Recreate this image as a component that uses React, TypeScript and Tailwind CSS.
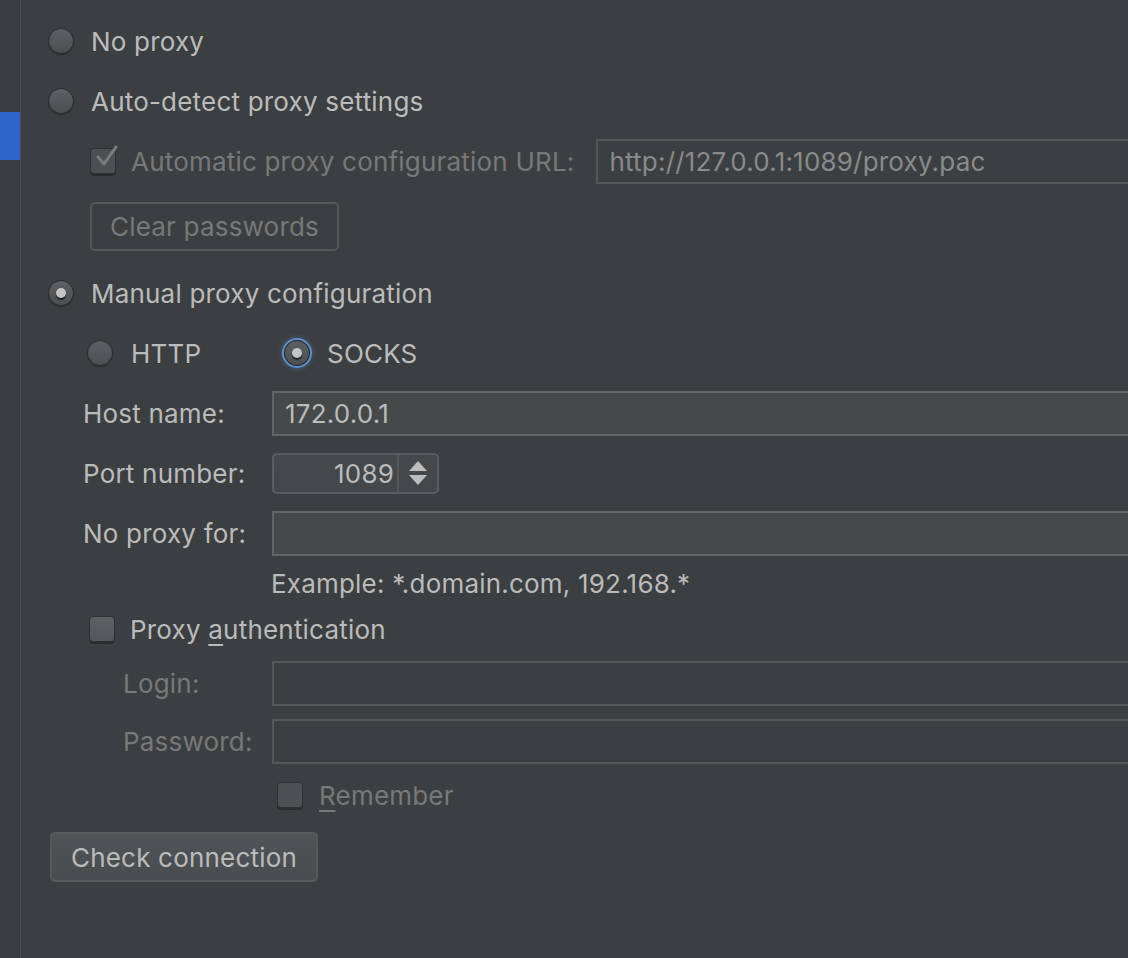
import React from "react";

const FONT = { fontFamily: "Inter, 'Open Sans', 'Liberation Sans', sans-serif" };

function Radio({ checked = false, focused = false }: { checked?: boolean; focused?: boolean }) {
  return (
    <span
      className={`flex h-[26px] w-[26px] shrink-0 items-center justify-center rounded-full border border-[#2a2c2e] bg-gradient-to-b from-[#5d6062] to-[#4c4f51] ${
        focused ? "shadow-[0_0_0_2px_#5b8fce,0_0_4px_3px_rgba(80,130,200,0.35)]" : "shadow-[0_1px_1px_rgba(0,0,0,0.35)]"
      }`}
    >
      {checked && <span className="h-[10px] w-[10px] rounded-full bg-[#c4c4c4] shadow-[0_2px_1px_#1f2022]" />}
    </span>
  );
}

function Checkbox({ checked = false, disabled = false }: { checked?: boolean; disabled?: boolean }) {
  return (
    <span
      className={`relative flex h-[26px] w-[26px] shrink-0 items-center justify-center rounded-[4px] border border-[#2e3032] shadow-[0_2px_0_rgba(0,0,0,0.3)] ${
        disabled ? "bg-[#4d5052]" : "bg-gradient-to-b from-[#5e6163] to-[#54575a]"
      }`}
    >
      {checked && (
        <svg width="26" height="30" viewBox="0 0 26 30" className="absolute left-[1px] top-[-9px]">
          <path d="M6 17 L12 24 L24 7" stroke={disabled ? "#7c7c7c" : "#bbbbbb"} strokeWidth="3" fill="none" strokeLinecap="round" strokeLinejoin="round" />
        </svg>
      )}
    </span>
  );
}

function Field({ value = "", enabled = true }: { value?: string; enabled?: boolean }) {
  return (
    <div
      className={`-mr-[6px] flex h-[45px] flex-1 items-center border-2 px-[11px] text-[26px] ${
        enabled ? "border-[#646464] bg-[#45494a] text-[#bbbbbb]" : "border-[#555757] bg-[#3c3f41] text-[#8a8a8a]"
      }`}
    >
      {value}
    </div>
  );
}

export default function App() {
  return (
    <div className="flex h-[958px] w-[1128px] overflow-hidden bg-[#3c3f41] text-[26px] text-[#bbbbbb]" style={FONT}>
      {/* sidebar */}
      <div className="flex w-[21px] shrink-0 flex-col border-r border-[#4b4d50] bg-[#3a3d42] pt-[112px]">
        <div className="h-[48px] bg-[#2f65ca]" />
      </div>

      {/* main */}
      <div className="flex min-w-0 flex-1 flex-col pl-[27px] pt-[11px] tracking-[0.2px]">
        <div className="flex h-[60px] items-center gap-[17px]">
          <Radio />
          <span>No proxy</span>
        </div>
        <div className="flex h-[60px] items-center gap-[17px]">
          <Radio />
          <span>Auto-detect proxy settings</span>
        </div>
        <div className="flex h-[60px] items-center pl-[42px]">
          <Checkbox checked disabled />
          <span className="ml-[15px] text-[#787878]">Automatic proxy configuration URL:</span>
          <div className="ml-[22px] flex flex-1">
            <Field value="http://127.0.0.1:1089/proxy.pac" enabled={false} />
          </div>
        </div>
        <div className="flex h-[70px] items-center pl-[42px]">
          <button className="flex h-[49px] w-[249px] items-center justify-center rounded-[5px] border-2 border-[#555758] text-[26px] text-[#787878]">
            Clear passwords
          </button>
        </div>
        <div className="flex h-[62px] items-center gap-[17px] pt-[2px]">
          <Radio checked />
          <span>Manual proxy configuration</span>
        </div>
        <div className="flex h-[60px] items-center pl-[39px]">
          <Radio />
          <span className="ml-[18px] w-[153px]">HTTP</span>
          <Radio checked focused />
          <span className="ml-[17px]">SOCKS</span>
        </div>
        <div className="flex h-[60px] items-center pl-[35px]">
          <span className="w-[189px] shrink-0">Host name:</span>
          <Field value="172.0.0.1" />
        </div>
        <div className="flex h-[60px] items-center pl-[35px]">
          <span className="w-[189px] shrink-0">Port number:</span>
          <div className="flex h-[41px] w-[167px] items-stretch rounded-[5px] border-2 border-[#5a5d5f] bg-gradient-to-b from-[#46494b] to-[#43474a]">
            <div className="flex flex-1 items-center justify-end pr-[3px]">1089</div>
            <div className="flex w-[40px] flex-col items-center justify-center gap-[4px] border-l-2 border-[#555859]">
              <svg width="18" height="10" viewBox="0 0 18 10"><path d="M9 0 L18 10 L0 10 Z" fill="#bdbdbd" /></svg>
              <svg width="18" height="10" viewBox="0 0 18 10"><path d="M0 0 L18 0 L9 10 Z" fill="#bdbdbd" /></svg>
            </div>
          </div>
        </div>
        <div className="flex h-[60px] items-center pl-[35px]">
          <span className="w-[189px] shrink-0">No proxy for:</span>
          <Field />
        </div>
        <div className="flex h-[40px] items-center pl-[223px]">
          <span>Example: *.domain.com, 192.168.*</span>
        </div>
        <div className="flex h-[52px] items-center pl-[41px]">
          <Checkbox />
          <span className="ml-[15px]">
            Proxy <u className="underline decoration-[2px] underline-offset-[5px]">a</u>uthentication
          </span>
        </div>
        <div className="flex h-[56px] items-center pl-[75px]">
          <span className="w-[149px] shrink-0 text-[#787878]">Login:</span>
          <Field enabled={false} />
        </div>
        <div className="flex h-[60px] items-center pl-[75px]">
          <span className="w-[149px] shrink-0 text-[#787878]">Password:</span>
          <Field enabled={false} />
        </div>
        <div className="flex h-[48px] items-center pl-[229px]">
          <Checkbox disabled />
          <span className="ml-[16px] text-[#787878]">
            <u className="underline decoration-[2px] underline-offset-[5px]">R</u>emember
          </span>
        </div>
        <div className="mt-[13px] flex pl-[2px]">
          <button className="flex h-[50px] w-[268px] items-center justify-center rounded-[5px] border-2 border-[#57595b] bg-gradient-to-b from-[#505456] to-[#484c4e] text-[26px] text-[#bbbbbb]">
            Check connection
          </button>
        </div>
      </div>
    </div>
  );
}
